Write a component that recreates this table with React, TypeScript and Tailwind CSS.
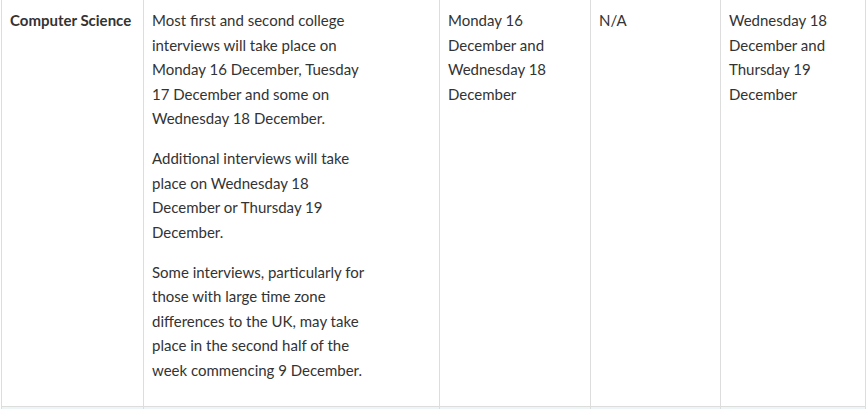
import React from "react";

const cell = "align-top border-x border-[#dddddd] px-[8px] pt-[8px] pb-[8px]";

export default function App() {
  return (
    <div
      className="w-[866px] h-[409px] overflow-hidden bg-white text-[#333333]"
      style={{ fontFamily: "Lato, 'Noto Sans', sans-serif" }}
    >
      <table className="ml-[1px] border-collapse table-fixed w-[864px] text-[15px] leading-[24.5px]">
        <colgroup>
          <col className="w-[142px]" />
          <col className="w-[296px]" />
          <col className="w-[151px]" />
          <col className="w-[130px]" />
          <col className="w-[145px]" />
        </colgroup>
        <tbody>
          <tr className="border-b border-[#dddddd]">
            <td className={cell + " font-bold whitespace-nowrap"}>Computer Science</td>
            <td className={cell + " pb-[8px]"}>
              <p className="mb-[15.5px]">
                Most first and second college
                <br />
                interviews will take place on
                <br />
                Monday 16 December, Tuesday
                <br />
                17 December and some on
                <br />
                Wednesday 18 December.
              </p>
              <p className="mb-[15.5px]">
                Additional interviews will take
                <br />
                place on Wednesday 18
                <br />
                December or Thursday 19
                <br />
                December.
              </p>
              <p className="mb-[15.5px]">
                Some interviews, particularly for
                <br />
                those with large time zone
                <br />
                differences to the UK, may take
                <br />
                place in the second half of the
                <br />
                week commencing 9 December.
              </p>
            </td>
            <td className={cell}>
              Monday 16
              <br />
              December and
              <br />
              Wednesday 18
              <br />
              December
            </td>
            <td className={cell}>N/A</td>
            <td className={cell}>
              Wednesday 18
              <br />
              December and
              <br />
              Thursday 19
              <br />
              December
            </td>
          </tr>
          <tr className="bg-[#eef5f7]">
            <td className={cell + " h-[30px]"}></td>
            <td className={cell}></td>
            <td className={cell}></td>
            <td className={cell}></td>
            <td className={cell}></td>
          </tr>
        </tbody>
      </table>
    </div>
  );
}
